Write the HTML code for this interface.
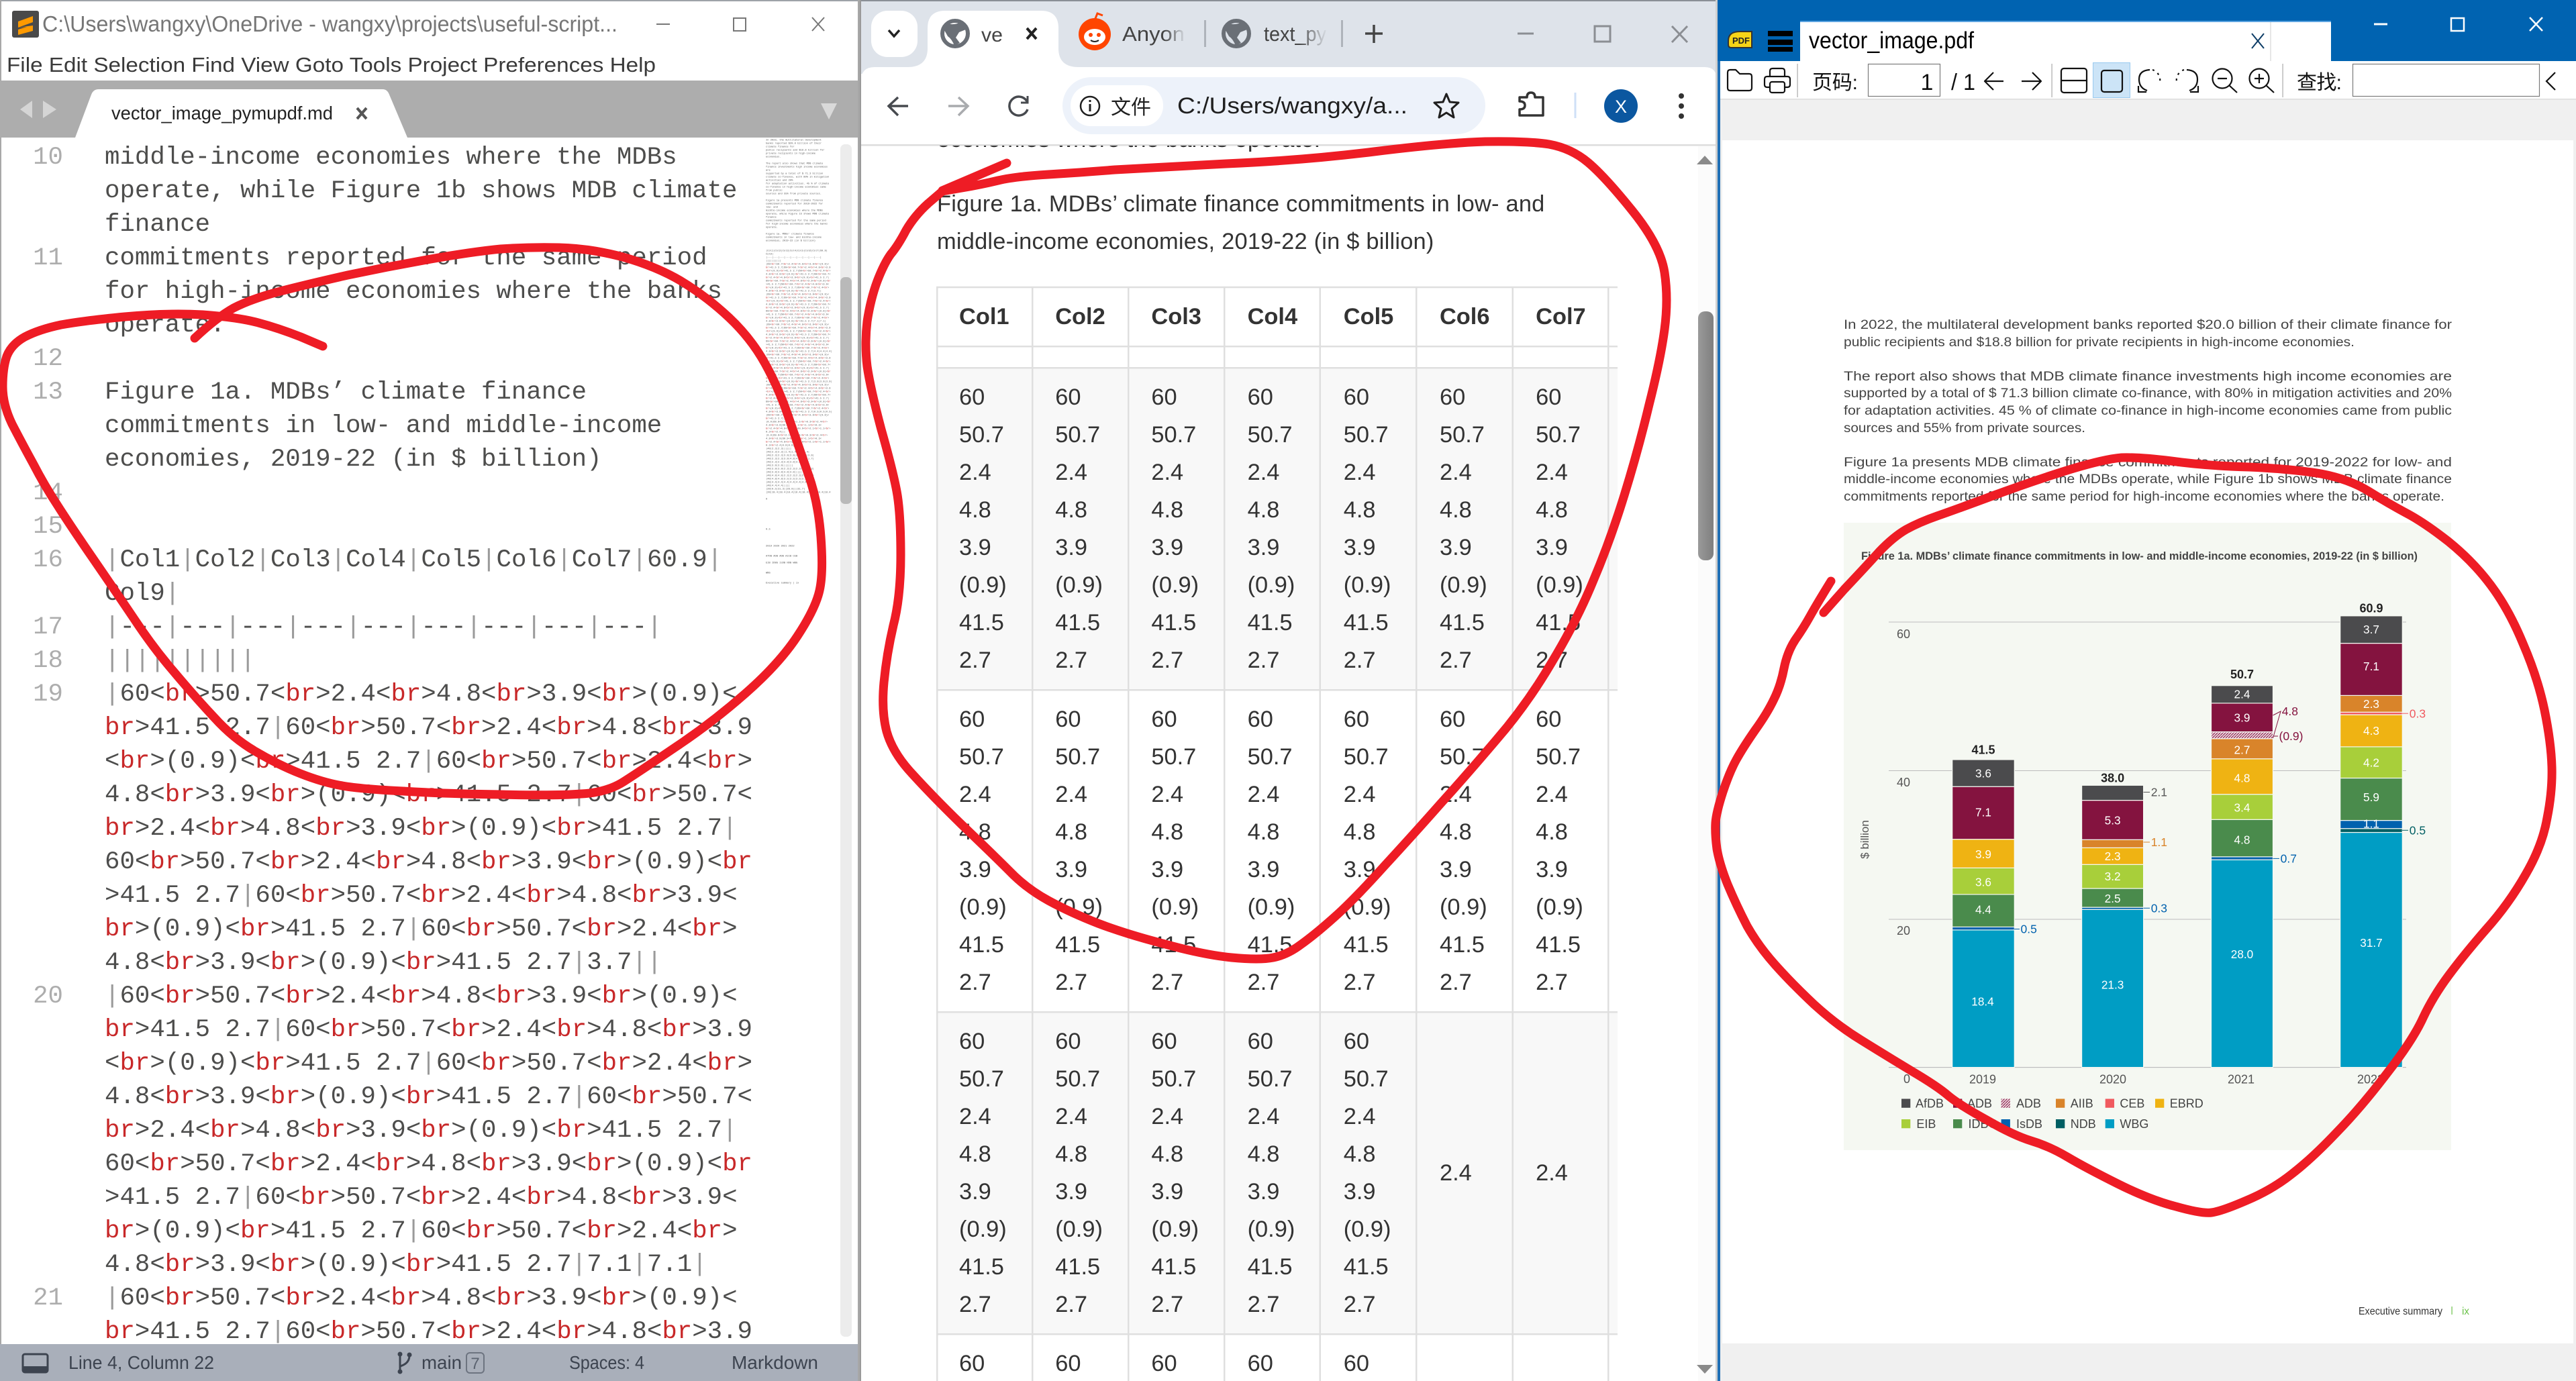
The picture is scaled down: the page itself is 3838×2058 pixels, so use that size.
<!DOCTYPE html>
<html lang="en"><head><meta charset="utf-8"><title>Screenshot</title>
<style>
html,body{margin:0;padding:0;background:#fff}
body{position:relative;width:3838px;height:2058px;overflow:hidden;font-family:"Liberation Sans","Noto Sans CJK SC",sans-serif}
svg{position:absolute;left:0;top:0}
svg text{font-family:"Liberation Sans","Noto Sans CJK SC",sans-serif}
.code,.nums,.mini{position:absolute;font-family:"Liberation Mono",monospace;white-space:pre;color:#4d4d4c}
.code{left:156px;top:210px;width:1000px;height:1793px;overflow:hidden;font-size:37.4px;line-height:50px}
.nums{left:48px;top:210px;width:46px;text-align:right;font-size:37.4px;line-height:50px;color:#adadad}
.mini{left:1141px;top:206px;font-size:37.4px;line-height:50px;transform:scale(.1);transform-origin:0 0;color:#5a5a5a}
.code i,.mini i{font-style:normal;color:#c82829}
.code u{text-decoration:none;color:#9a9a9a}
#cnt{position:absolute;left:0;top:217px;width:2410px;height:1841px;overflow:hidden;color:#333;font-size:34.4px;line-height:56px}
#cnt .t{position:absolute;left:1396px;white-space:nowrap;letter-spacing:.22px}
.r{position:absolute;left:1396px;display:grid;grid-template-columns:repeat(8,143.2px)}
.r div{padding-left:33px}
.h{font-weight:bold}
</style></head><body>
<svg width="3838" height="2058" viewBox="0 0 3838 2058">
<defs>
<linearGradient id="fd"><stop offset="0" stop-color="#dee3ea" stop-opacity="0"/><stop offset="1" stop-color="#dee3ea"/></linearGradient>
<linearGradient id="fw"><stop offset="0" stop-color="#fff" stop-opacity="0"/><stop offset="1" stop-color="#fff"/></linearGradient>
<linearGradient id="th" x1="0" x2="1"><stop offset="0" stop-color="#9a9a9a"/><stop offset="1" stop-color="#7f7f7f"/></linearGradient>
<pattern id="hat" width="4" height="4" patternUnits="userSpaceOnUse"><rect width="4" height="4" fill="#e9d3dc"/><path d="M0 4L4 0" stroke="#84133f" stroke-width="1"/></pattern>
</defs>

<!-- SUBLIME -->
<rect x="0" y="0" width="1281" height="2058" fill="#fff"/>
<rect x="0" y="0" width="1281" height="2" fill="#9ea3a8"/>
<rect x="0" y="0" width="2" height="2058" fill="#a8a8a8"/>
<rect x="18" y="16" width="40" height="40" rx="3" fill="#4a4a4a"/>
<path d="M27 32L49 24V33L27 41ZM27 41L49 38V46L27 52V44L40 40Z" fill="#ff9a00"/>
<text x="63" y="47" font-size="33" fill="#767676" textLength="857" lengthAdjust="spacingAndGlyphs">C:\Users\wangxy\OneDrive - wangxy\projects\useful-script...</text>
<path d="M978 36H998" stroke="#777" stroke-width="2"/>
<rect x="1093" y="27" width="18" height="19" fill="none" stroke="#777" stroke-width="2"/>
<path d="M1210 26L1228 46M1228 26L1210 46" stroke="#777" stroke-width="2"/>
<text x="10" y="107" font-size="31" fill="#3a3a3a" textLength="967" lengthAdjust="spacingAndGlyphs">File Edit Selection Find View Goto Tools Project Preferences Help</text>
<rect x="0" y="120" width="1280" height="85" fill="#adadad"/>
<path d="M112 205L136 141Q139 133 147 133H570Q577 133 580 141L607 205Z" fill="#fff"/>
<path d="M48 150V176L30 163ZM64 150V176L84 163Z" fill="#d5d5d5"/>
<path d="M1223 154H1247L1235 178Z" fill="#d9d9d9"/>
<text x="166" y="178" font-size="28" fill="#222" textLength="330" lengthAdjust="spacingAndGlyphs">vector_image_pymupdf.md</text>
<path d="M532 161L546 177M546 161L532 177" stroke="#555" stroke-width="4"/>
<rect x="1252" y="215" width="17" height="1777" rx="7" fill="#ececec"/>
<rect x="1252" y="413" width="17" height="338" rx="7" fill="#b9b9b9"/>
<rect x="0" y="2003" width="1281" height="55" fill="#a9afba"/>
<rect x="34" y="2018" width="37" height="27" rx="3" fill="none" stroke="#3d4450" stroke-width="3"/>
<rect x="34" y="2036" width="37" height="9" fill="#3d4450"/>
<text x="102" y="2040" font-size="28" fill="#3d4450" textLength="217" lengthAdjust="spacingAndGlyphs">Line 4, Column 22</text>
<path d="M596 2018V2044M596 2036Q610 2032 610 2020" fill="none" stroke="#3d4450" stroke-width="3"/>
<circle cx="596" cy="2018" r="3.5" fill="#3d4450"/><circle cx="596" cy="2044" r="3.5" fill="#3d4450"/><circle cx="610" cy="2019" r="3.5" fill="#3d4450"/>
<text x="628" y="2040" font-size="28" fill="#3d4450" textLength="60" lengthAdjust="spacingAndGlyphs">main</text>
<rect x="695" y="2016" width="26" height="30" rx="5" fill="none" stroke="#6d7480" stroke-width="2"/>
<text x="708" y="2040" font-size="24" fill="#5b6370" text-anchor="middle">7</text>
<text x="848" y="2040" font-size="28" fill="#3d4450" textLength="112" lengthAdjust="spacingAndGlyphs">Spaces: 4</text>
<text x="1090" y="2040" font-size="28" fill="#3d4450" textLength="129" lengthAdjust="spacingAndGlyphs">Markdown</text>
<rect x="1278" y="0" width="5" height="2058" fill="#a7a7a7"/>

<!-- CHROME -->
<rect x="1281" y="0" width="1280" height="2058" fill="#fff"/>
<rect x="1281" y="0" width="2" height="2058" fill="#9a9a9a"/>
<rect x="1283" y="0" width="1277" height="110" fill="#dee3ea"/>
<rect x="1283" y="0" width="1277" height="2" fill="#8a8f96"/>
<rect x="1298" y="16" width="69" height="69" rx="24" fill="#fff"/>
<path d="M1324 45L1332 54L1340 45" fill="none" stroke="#222" stroke-width="3.5"/>
<path d="M1352 100Q1382 100 1382 72V42Q1382 16 1408 16H1551Q1577 16 1577 42V72Q1577 100 1607 100Z" fill="#fff"/>
<circle cx="1423" cy="50" r="19" fill="#fff" stroke="#6a6f76" stroke-width="6"/>
<path d="M1411 35Q1422 38 1431 33L1439 44L1429 48L1424 56L1430 64L1422 68Q1418 58 1412 54L1407 45Z" fill="#6a6f76"/>
<text x="1462" y="62" font-size="30" fill="#444" textLength="32" lengthAdjust="spacingAndGlyphs">ve</text>
<path d="M1530 42L1544 58M1544 42L1530 58" stroke="#222" stroke-width="4"/>
<circle cx="1631" cy="51" r="24" fill="#ff4500"/><path d="M1631 30L1635 20L1643 23" fill="none" stroke="#ff4500" stroke-width="3"/>
<ellipse cx="1631" cy="55" rx="16" ry="12" fill="#fff"/><circle cx="1625" cy="52" r="3" fill="#ff4500"/><circle cx="1637" cy="52" r="3" fill="#ff4500"/>
<path d="M1625 60Q1631 64 1637 60" fill="none" stroke="#222" stroke-width="2"/>
<text x="1672" y="61" font-size="31" fill="#444" textLength="93" lengthAdjust="spacingAndGlyphs">Anyon</text>
<rect x="1735" y="25" width="32" height="50" fill="url(#fd)"/>
<rect x="1794" y="30" width="3" height="40" fill="#aeb3ba"/>
<circle cx="1842" cy="50" r="19" fill="#dee3ea" stroke="#6a6f76" stroke-width="6"/>
<path d="M1830 35Q1841 38 1850 33L1858 44L1848 48L1843 56L1849 64L1841 68Q1837 58 1831 54L1826 45Z" fill="#6a6f76"/>
<text x="1883" y="61" font-size="31" fill="#444" textLength="93" lengthAdjust="spacingAndGlyphs">text_py</text>
<rect x="1936" y="25" width="42" height="50" fill="url(#fd)"/>
<rect x="1998" y="30" width="3" height="40" fill="#aeb3ba"/>
<path d="M2047 37V64M2034 50H2060" stroke="#444" stroke-width="3.5"/>
<path d="M2261 50H2285" stroke="#8b8e93" stroke-width="3"/>
<rect x="2376" y="39" width="23" height="23" fill="none" stroke="#8b8e93" stroke-width="3"/>
<path d="M2491 39L2514 63M2514 39L2491 63" stroke="#8b8e93" stroke-width="3"/>
<path d="M1283 216V120Q1283 100 1303 100H2540Q2558 100 2558 120V216Z" fill="#fff"/>
<rect x="1283" y="215" width="1277" height="2.5" fill="#dcdcdc"/>
<path d="M1353 158H1325M1338 145L1324 158L1338 172" fill="none" stroke="#474a4f" stroke-width="3.5"/>
<path d="M1413 158H1441M1428 145L1442 158L1428 172" fill="none" stroke="#a9abae" stroke-width="3.5"/>
<path d="M1530 151A14 14 0 1 0 1531 163" fill="none" stroke="#474a4f" stroke-width="3.5"/><path d="M1531 143V153H1521" fill="none" stroke="#474a4f" stroke-width="3"/>
<rect x="1583" y="115" width="630" height="85" rx="42.5" fill="#edf2fa"/>
<rect x="1595" y="127" width="138" height="61" rx="30" fill="#fff"/>
<circle cx="1624" cy="158" r="14" fill="none" stroke="#1f1f1f" stroke-width="2.5"/><path d="M1624 155V166M1624 149V152" stroke="#1f1f1f" stroke-width="3"/>
<text x="1655" y="170" font-size="30" fill="#1f1f1f" textLength="60">文件</text>
<text x="1754" y="169" font-size="34" fill="#1f1f1f" textLength="343" lengthAdjust="spacingAndGlyphs">C:/Users/wangxy/a...</text>
<path d="M2155 140L2160 152L2173 153L2163 162L2166 175L2155 168L2144 175L2147 162L2137 153L2150 152Z" fill="none" stroke="#1f1f1f" stroke-width="3" stroke-linejoin="round"/>
<path d="M2264 145H2275Q2275 138 2281 138Q2287 138 2287 145H2299V172H2264V163Q2272 163 2272 157Q2272 151 2264 151Z" fill="none" stroke="#333" stroke-width="3.5" stroke-linejoin="round"/>
<rect x="2345.5" y="138" width="3" height="38" fill="#cfe0f7"/>
<circle cx="2415" cy="158" r="25" fill="#0b57a0"/>
<text x="2415" y="168" font-size="27" fill="#fff" text-anchor="middle">X</text>
<circle cx="2505" cy="143" r="4" fill="#333"/><circle cx="2505" cy="158" r="4" fill="#333"/><circle cx="2505" cy="173" r="4" fill="#333"/>
<rect x="1396" y="548" width="1014" height="480" fill="#f8f8f8"/>
<rect x="1396" y="1508" width="1014" height="480" fill="#f8f8f8"/>
<g fill="#dfdfdf">
<rect x="1395" y="428" width="2.5" height="1630"/><rect x="1537" y="428" width="2.5" height="1630"/><rect x="1680" y="428" width="2.5" height="1630"/><rect x="1823" y="428" width="2.5" height="1630"/><rect x="1965.5" y="428" width="2.5" height="1630"/><rect x="2109" y="428" width="2.5" height="1630"/><rect x="2252.5" y="428" width="2.5" height="1630"/><rect x="2395" y="428" width="2.5" height="1630"/>
<rect x="1395" y="426.8" width="1015" height="2.5"/><rect x="1395" y="515" width="1015" height="2.5"/><rect x="1395" y="547" width="1015" height="2.5"/><rect x="1395" y="1027" width="1015" height="2.5"/><rect x="1395" y="1507" width="1015" height="2.5"/><rect x="1395" y="1987" width="1015" height="2.5"/>
</g>
<rect x="2530" y="218" width="28" height="1840" fill="#fbfbfb"/>
<rect x="2530" y="464" width="23" height="371" rx="10" fill="url(#th)"/>
<path d="M2540 232L2552 245H2528Z" fill="#8a8a8a"/>
<path d="M2528 2034H2552L2540 2047Z" fill="#8a8a8a"/>
<rect x="2556" y="0" width="3" height="2058" fill="#cfcfcf"/>

<!-- PDF -->
<rect x="2559" y="0" width="1279" height="2058" fill="#f0f0f0"/>
<rect x="2559" y="0" width="4" height="2058" fill="#1f6fb5"/>
<rect x="2559" y="0" width="1279" height="91" fill="#0063b1"/>
<rect x="2563" y="91" width="1275" height="57" fill="#fff"/><rect x="2563" y="147" width="1275" height="1.5" fill="#dcdcdc"/>
<rect x="2566" y="209" width="1268" height="1793" fill="#fff"/>
<path d="M2575 61Q2575 47 2592 47H2610V71H2579Q2575 71 2575 66Z" fill="#f7d417" stroke="#333" stroke-width="2"/>
<text x="2594" y="65" font-size="13" font-weight="bold" fill="#222" text-anchor="middle">PDF</text>
<rect x="2634" y="46" width="37" height="8" fill="#000"/><rect x="2634" y="59" width="37" height="8" fill="#000"/><rect x="2634" y="70" width="37" height="7" fill="#000"/>
<rect x="2682" y="32" width="791" height="59" fill="#fff"/><rect x="2682" y="31" width="791" height="2" fill="#5aa3e0"/>
<rect x="3382.5" y="33" width="1" height="58" fill="#cfcfcf"/>
<text x="2695" y="72" font-size="35" fill="#000" textLength="246" lengthAdjust="spacingAndGlyphs">vector_image.pdf</text>
<path d="M3355 50L3373 72M3373 50L3355 72" stroke="#0c3c66" stroke-width="2"/>
<path d="M3537 36H3557" stroke="#fff" stroke-width="3"/>
<rect x="3652" y="27" width="19" height="19" fill="none" stroke="#fff" stroke-width="2.5"/>
<path d="M3769 26L3788 46M3788 26L3769 46" stroke="#fff" stroke-width="2.5"/>
<g fill="none" stroke="#111" stroke-width="2.2" stroke-linejoin="round">
<path d="M2574 108Q2574 104 2578 104H2586L2592 110H2606Q2610 110 2610 114V131Q2610 135 2606 135H2578Q2574 135 2574 131Z"/>
<path d="M2637 114V106Q2637 102 2641 102H2655Q2659 102 2659 106V114M2637 130H2633Q2629 130 2629 126V118Q2629 114 2633 114H2663Q2667 114 2667 118V126Q2667 130 2663 130H2659"/>
<rect x="2637" y="122" width="22" height="16" rx="3"/>
<path d="M2985 121H2958M2970 108L2957 121L2970 134M3012 121H3040M3028 108L3041 121L3028 134"/>
<rect x="3071" y="102" width="38" height="36" rx="4"/><path d="M3071 120H3109"/>
</g>
<rect x="3118.5" y="93.5" width="55" height="52" fill="#cce4f7" stroke="#99c9ef"/>
<rect x="3131" y="105" width="31" height="32" rx="4" fill="none" stroke="#111" stroke-width="2.2"/>
<g fill="none" stroke="#111" stroke-width="2.2">
<path d="M3199 135Q3187 131 3187 118Q3187 105 3203 104"/><path d="M3186 128V137H3198"/><path d="M3207 104A16 16 0 0 1 3218 122" stroke-dasharray="3 6"/>
<path d="M3262 135Q3274 131 3274 118Q3274 105 3258 104"/><path d="M3275 128V137H3263"/><path d="M3254 104A16 16 0 0 0 3243 122" stroke-dasharray="3 6"/>
<circle cx="3311" cy="117" r="14.5"/><path d="M3304 117H3318M3321 127L3333 138"/>
<circle cx="3366" cy="117" r="14.5"/><path d="M3359 117H3373M3366 110V124M3376 127L3388 138"/>
<path d="M3807 108L3794 121L3807 134"/>
</g>
<rect x="2677.5" y="95" width="1.2" height="50" fill="#aaa"/><rect x="3056.5" y="95" width="1.2" height="50" fill="#aaa"/><rect x="3400.5" y="95" width="1.2" height="50" fill="#aaa"/>
<text x="2700" y="133" font-size="30" fill="#111" textLength="68">页码:</text>
<rect x="2783.5" y="95.5" width="107" height="48" fill="#fff" stroke="#7a7a7a" stroke-width="1.2"/>
<text x="2871" y="134" font-size="34" fill="#111" text-anchor="middle">1</text>
<text x="2907" y="134" font-size="34" fill="#111" textLength="36" lengthAdjust="spacingAndGlyphs">/ 1</text>
<text x="3422" y="133" font-size="30" fill="#111" textLength="67">查找:</text>
<rect x="3505.5" y="95.5" width="278" height="48" fill="#fff" stroke="#7a7a7a" stroke-width="1.2"/>
<g font-size="19.5" fill="#444">
<text x="2747" y="490" textLength="906" lengthAdjust="spacingAndGlyphs">In 2022, the multilateral development banks reported $20.0 billion of their climate finance for</text>
<text x="2747" y="516" textLength="761" lengthAdjust="spacingAndGlyphs">public recipients and $18.8 billion for private recipients in high-income economies.</text>
<text x="2747" y="567" textLength="906" lengthAdjust="spacingAndGlyphs">The report also shows that MDB climate finance investments high income economies are</text>
<text x="2747" y="592" textLength="906" lengthAdjust="spacingAndGlyphs">supported by a total of $ 71.3 billion climate co-finance, with 80% in mitigation activities and 20%</text>
<text x="2747" y="618" textLength="906" lengthAdjust="spacingAndGlyphs">for adaptation activities. 45 % of climate co-finance in high-income economies came from public</text>
<text x="2747" y="644" textLength="360" lengthAdjust="spacingAndGlyphs">sources and 55% from private sources.</text>
<text x="2747" y="695" textLength="906" lengthAdjust="spacingAndGlyphs">Figure 1a presents MDB climate finance commitments reported for 2019-2022 for low- and</text>
<text x="2747" y="720" textLength="906" lengthAdjust="spacingAndGlyphs">middle-income economies where the MDBs operate, while Figure 1b shows MDB climate finance</text>
<text x="2747" y="746" textLength="895" lengthAdjust="spacingAndGlyphs">commitments reported for the same period for high-income economies where the banks operate.</text>
</g>
<rect x="2747" y="779" width="905" height="935" fill="#f5f8f2"/>
<text x="2773" y="834" font-size="16.5" font-weight="bold" fill="#444" textLength="829" lengthAdjust="spacingAndGlyphs">Figure 1a. MDBs’ climate finance commitments in low- and middle-income economies, 2019-22 (in $ billion)</text>
<g fill="#bdbdbd"><rect x="2814" y="926.5" width="771" height="1"/><rect x="2814" y="1148" width="771" height="1"/><rect x="2814" y="1369.5" width="771" height="1"/><rect x="2814" y="1590" width="771" height="1.2"/></g>
<g font-size="18" fill="#555" text-anchor="middle">
<text x="2836" y="951">60</text><text x="2836" y="1172">40</text><text x="2836" y="1393">20</text><text x="2841" y="1614">0</text>
<text x="2954" y="1614.5">2019</text><text x="3148" y="1614.5">2020</text><text x="3339" y="1614.5">2021</text><text x="3532" y="1614.5">2022</text>
<text transform="translate(2784 1251) rotate(-90)" font-size="17">$ billion</text>
</g>
<g stroke="#f5f8f2" stroke-width="1.2">
<rect x="2908.7" y="1385.9" width="92.6" height="204.7" fill="#009dc4"/><rect x="2908.7" y="1381.4" width="92.6" height="4.5" fill="#0061ae"/><rect x="2908.7" y="1332.9" width="92.6" height="48.5" fill="#4a8b4c"/><rect x="2908.7" y="1293.4" width="92.6" height="39.5" fill="#a8cf3a"/><rect x="2908.7" y="1250.7" width="92.6" height="42.7" fill="#efb313"/><rect x="2908.7" y="1172.2" width="92.6" height="78.5" fill="#84133f"/><rect x="2908.7" y="1132" width="92.6" height="40.2" fill="#4b4b4d"/>
<rect x="3101.6" y="1355.3" width="92" height="235.3" fill="#009dc4"/><rect x="3101.6" y="1352.1" width="92" height="3.2" fill="#0061ae"/><rect x="3101.6" y="1324" width="92" height="28.1" fill="#4a8b4c"/><rect x="3101.6" y="1288.3" width="92" height="35.7" fill="#a8cf3a"/><rect x="3101.6" y="1263.4" width="92" height="24.9" fill="#efb313"/><rect x="3101.6" y="1251.3" width="92" height="12.1" fill="#d9842a"/><rect x="3101.6" y="1192.6" width="92" height="58.7" fill="#84133f"/><rect x="3101.6" y="1170.3" width="92" height="22.3" fill="#4b4b4d"/>
<rect x="3294.5" y="1281.3" width="92" height="309.3" fill="#009dc4"/><rect x="3294.5" y="1276.8" width="92" height="4.5" fill="#0061ae"/><rect x="3294.5" y="1221.3" width="92" height="55.5" fill="#4a8b4c"/><rect x="3294.5" y="1183.7" width="92" height="37.6" fill="#a8cf3a"/><rect x="3294.5" y="1130.8" width="92" height="52.9" fill="#efb313"/><rect x="3294.5" y="1100.8" width="92" height="30" fill="#d9842a"/><rect x="3294.5" y="1090.6" width="92" height="10.2" fill="url(#hat)"/><rect x="3294.5" y="1047.9" width="92" height="42.7" fill="#84133f"/><rect x="3294.5" y="1021.7" width="92" height="26.2" fill="#4b4b4d"/>
<rect x="3486.7" y="1240.5" width="92.6" height="350.1" fill="#009dc4"/><rect x="3486.7" y="1234.7" width="92.6" height="5.8" fill="#005f63"/><rect x="3486.7" y="1222.6" width="92.6" height="12.1" fill="#0061ae"/><rect x="3486.7" y="1159.5" width="92.6" height="63.1" fill="#4a8b4c"/><rect x="3486.7" y="1112.9" width="92.6" height="46.6" fill="#a8cf3a"/><rect x="3486.7" y="1065.1" width="92.6" height="47.8" fill="#efb313"/><rect x="3486.7" y="1061.3" width="92.6" height="3.8" fill="#f05a5f"/><rect x="3486.7" y="1036.4" width="92.6" height="24.9" fill="#d9842a"/><rect x="3486.7" y="958.6" width="92.6" height="77.8" fill="#84133f"/><rect x="3486.7" y="917.8" width="92.6" height="40.8" fill="#4b4b4d"/>
</g>
<g font-size="17.2" fill="#fff" text-anchor="middle">
<text x="2955" y="1158.5">3.6</text><text x="2955" y="1216.5">7.1</text><text x="2955" y="1279">3.9</text><text x="2955" y="1320.5">3.6</text><text x="2955" y="1361.5">4.4</text><text x="2954" y="1498.5">18.4</text>
<text x="3147.6" y="1228.5">5.3</text><text x="3147.6" y="1282">2.3</text><text x="3147.6" y="1312">3.2</text><text x="3147.6" y="1345">2.5</text><text x="3147.6" y="1473.5">21.3</text>
<text x="3340.5" y="1040.5">2.4</text><text x="3340.5" y="1075.5">3.9</text><text x="3340.5" y="1123.5">2.7</text><text x="3340.5" y="1165.5">4.8</text><text x="3340.5" y="1209.5">3.4</text><text x="3340.5" y="1257.5">4.8</text><text x="3340.5" y="1428">28.0</text>
<text x="3533" y="944">3.7</text><text x="3533" y="999">7.1</text><text x="3533" y="1055">2.3</text><text x="3533" y="1095">4.3</text><text x="3533" y="1142.5">4.2</text><text x="3533" y="1194">5.9</text><text x="3533" y="1233.5">1.1</text><text x="3533" y="1411">31.7</text>
</g>
<g font-size="18" font-weight="bold" fill="#222" text-anchor="middle">
<text x="2955" y="1123.5">41.5</text><text x="3147.6" y="1165.5">38.0</text><text x="3340.5" y="1011">50.7</text><text x="3533" y="912.5">60.9</text>
</g>
<g font-size="17.5">
<text x="3010.5" y="1390.5" fill="#0061ae">0.5</text><text x="3204.7" y="1186.5" fill="#555">2.1</text><text x="3204.7" y="1261" fill="#d9842a">1.1</text><text x="3204.7" y="1359.5" fill="#0061ae">0.3</text>
<text x="3399.7" y="1066" fill="#84133f">4.8</text><text x="3395.5" y="1103" fill="#84133f">(0.9)</text><text x="3397.6" y="1285.5" fill="#0061ae">0.7</text>
<text x="3589.8" y="1069.5" fill="#f05a5f">0.3</text><text x="3589.8" y="1243.5" fill="#005f63">0.5</text>
</g>
<g fill="none" stroke-width="1">
<path d="M3001 1384.5H3009" stroke="#0061ae"/><path d="M3193.5 1180.5H3203" stroke="#555"/><path d="M3193.5 1255H3203" stroke="#d9842a"/><path d="M3193.5 1353.3H3203" stroke="#0061ae"/>
<path d="M3386.5 1066L3398 1060L3386.5 1100M3386.5 1097H3394" stroke="#84133f"/><path d="M3386.5 1279.4H3396" stroke="#0061ae"/>
<path d="M3579 1063.2H3588" stroke="#f05a5f"/><path d="M3579 1237.3H3588" stroke="#005f63"/>
</g>
<g>
<rect x="2833" y="1637.5" width="13.3" height="13.3" fill="#4b4b4d"/><rect x="2910" y="1637.5" width="13.3" height="13.3" fill="#84133f"/><rect x="2981.6" y="1637.5" width="13.3" height="13.3" fill="url(#hat)"/><rect x="3063" y="1637.5" width="13.3" height="13.3" fill="#d9842a"/><rect x="3136.7" y="1637.5" width="13.3" height="13.3" fill="#f05a5f"/><rect x="3211" y="1637.5" width="13.3" height="13.3" fill="#efb313"/>
<rect x="2833" y="1668" width="13.3" height="13.3" fill="#a8cf3a"/><rect x="2910" y="1668" width="13.3" height="13.3" fill="#4a8b4c"/><rect x="2981.6" y="1668" width="13.3" height="13.3" fill="#0061ae"/><rect x="3063" y="1668" width="13.3" height="13.3" fill="#005f63"/><rect x="3136.7" y="1668" width="13.3" height="13.3" fill="#009dc4"/>
</g>
<g font-size="18" fill="#444">
<text x="2854" y="1650.5">AfDB</text><text x="2931" y="1650.5">ADB</text><text x="3004" y="1650.5">ADB</text><text x="3084.8" y="1650.5">AIIB</text><text x="3158.4" y="1650.5">CEB</text><text x="3232.8" y="1650.5">EBRD</text>
<text x="2855.4" y="1681">EIB</text><text x="2932.5" y="1681">IDBG</text><text x="3004" y="1681">IsDB</text><text x="3084.8" y="1681">NDB</text><text x="3158.4" y="1681">WBG</text>
</g>
<text x="3514" y="1959" font-size="16" fill="#333" textLength="125" lengthAdjust="spacingAndGlyphs">Executive summary</text>
<rect x="3652.5" y="1947" width="1.2" height="12" fill="#6cc24a"/>
<text x="3668" y="1959" font-size="16" fill="#6cc24a" textLength="11" lengthAdjust="spacingAndGlyphs">ix</text>
</svg>

<div class="nums">10


11


12
13


14
15
16

17
18
19








20








21</div>

<div class="code">middle-income economies where the MDBs
operate, while Figure 1b shows MDB climate
finance
commitments reported for the same period
for high-income economies where the banks
operate.

Figure 1a. MDBs’ climate finance
commitments in low- and middle-income
economies, 2019-22 (in $ billion)


<u>|</u>Col1<u>|</u>Col2<u>|</u>Col3<u>|</u>Col4<u>|</u>Col5<u>|</u>Col6<u>|</u>Col7<u>|</u>60.9<u>|</u>
Col9<u>|</u>
<u>|</u>---<u>|</u>---<u>|</u>---<u>|</u>---<u>|</u>---<u>|</u>---<u>|</u>---<u>|</u>---<u>|</u>---<u>|</u>
<u>||||||||||</u>
<u>|</u>60&lt;<i>br</i>&gt;50.7&lt;<i>br</i>&gt;2.4&lt;<i>br</i>&gt;4.8&lt;<i>br</i>&gt;3.9&lt;<i>br</i>&gt;(0.9)&lt;
<i>br</i>&gt;41.5 2.7<u>|</u>60&lt;<i>br</i>&gt;50.7&lt;<i>br</i>&gt;2.4&lt;<i>br</i>&gt;4.8&lt;<i>br</i>&gt;3.9
&lt;<i>br</i>&gt;(0.9)&lt;<i>br</i>&gt;41.5 2.7<u>|</u>60&lt;<i>br</i>&gt;50.7&lt;<i>br</i>&gt;2.4&lt;<i>br</i>&gt;
4.8&lt;<i>br</i>&gt;3.9&lt;<i>br</i>&gt;(0.9)&lt;<i>br</i>&gt;41.5 2.7<u>|</u>60&lt;<i>br</i>&gt;50.7&lt;
<i>br</i>&gt;2.4&lt;<i>br</i>&gt;4.8&lt;<i>br</i>&gt;3.9&lt;<i>br</i>&gt;(0.9)&lt;<i>br</i>&gt;41.5 2.7<u>|</u>
60&lt;<i>br</i>&gt;50.7&lt;<i>br</i>&gt;2.4&lt;<i>br</i>&gt;4.8&lt;<i>br</i>&gt;3.9&lt;<i>br</i>&gt;(0.9)&lt;<i>br</i>
&gt;41.5 2.7<u>|</u>60&lt;<i>br</i>&gt;50.7&lt;<i>br</i>&gt;2.4&lt;<i>br</i>&gt;4.8&lt;<i>br</i>&gt;3.9&lt;
<i>br</i>&gt;(0.9)&lt;<i>br</i>&gt;41.5 2.7<u>|</u>60&lt;<i>br</i>&gt;50.7&lt;<i>br</i>&gt;2.4&lt;<i>br</i>&gt;
4.8&lt;<i>br</i>&gt;3.9&lt;<i>br</i>&gt;(0.9)&lt;<i>br</i>&gt;41.5 2.7<u>|</u>3.7<u>||</u>
<u>|</u>60&lt;<i>br</i>&gt;50.7&lt;<i>br</i>&gt;2.4&lt;<i>br</i>&gt;4.8&lt;<i>br</i>&gt;3.9&lt;<i>br</i>&gt;(0.9)&lt;
<i>br</i>&gt;41.5 2.7<u>|</u>60&lt;<i>br</i>&gt;50.7&lt;<i>br</i>&gt;2.4&lt;<i>br</i>&gt;4.8&lt;<i>br</i>&gt;3.9
&lt;<i>br</i>&gt;(0.9)&lt;<i>br</i>&gt;41.5 2.7<u>|</u>60&lt;<i>br</i>&gt;50.7&lt;<i>br</i>&gt;2.4&lt;<i>br</i>&gt;
4.8&lt;<i>br</i>&gt;3.9&lt;<i>br</i>&gt;(0.9)&lt;<i>br</i>&gt;41.5 2.7<u>|</u>60&lt;<i>br</i>&gt;50.7&lt;
<i>br</i>&gt;2.4&lt;<i>br</i>&gt;4.8&lt;<i>br</i>&gt;3.9&lt;<i>br</i>&gt;(0.9)&lt;<i>br</i>&gt;41.5 2.7<u>|</u>
60&lt;<i>br</i>&gt;50.7&lt;<i>br</i>&gt;2.4&lt;<i>br</i>&gt;4.8&lt;<i>br</i>&gt;3.9&lt;<i>br</i>&gt;(0.9)&lt;<i>br</i>
&gt;41.5 2.7<u>|</u>60&lt;<i>br</i>&gt;50.7&lt;<i>br</i>&gt;2.4&lt;<i>br</i>&gt;4.8&lt;<i>br</i>&gt;3.9&lt;
<i>br</i>&gt;(0.9)&lt;<i>br</i>&gt;41.5 2.7<u>|</u>60&lt;<i>br</i>&gt;50.7&lt;<i>br</i>&gt;2.4&lt;<i>br</i>&gt;
4.8&lt;<i>br</i>&gt;3.9&lt;<i>br</i>&gt;(0.9)&lt;<i>br</i>&gt;41.5 2.7<u>|</u>7.1<u>|</u>7.1<u>|</u>
<u>|</u>60&lt;<i>br</i>&gt;50.7&lt;<i>br</i>&gt;2.4&lt;<i>br</i>&gt;4.8&lt;<i>br</i>&gt;3.9&lt;<i>br</i>&gt;(0.9)&lt;
<i>br</i>&gt;41.5 2.7<u>|</u>60&lt;<i>br</i>&gt;50.7&lt;<i>br</i>&gt;2.4&lt;<i>br</i>&gt;4.8&lt;<i>br</i>&gt;3.9</div>

<div class="mini">In 2022, the multilateral development
banks reported $20.0 billion of their
climate finance for
public recipients and $18.8 billion for
private recipients in high-income
economies.

The report also shows that MDB climate
finance investments high income economies
are
supported by a total of $ 71.3 billion
climate co-finance, with 80% in mitigation
activities and 20%
for adaptation activities. 45 % of climate
co-finance in high-income economies came
from public
sources and 55% from private sources.

Figure 1a presents MDB climate finance
commitments reported for 2019-2022 for
low- and
middle-income economies where the MDBs
operate, while Figure 1b shows MDB climate
finance
commitments reported for the same period
for high-income economies where the banks
operate.

Figure 1a. MDBs’ climate finance
commitments in low- and middle-income
economies, 2019-22 (in $ billion)


|Col1|Col2|Col3|Col4|Col5|Col6|Col7|60.9|
Col9|
|---|---|---|---|---|---|---|---|---|
||||||||||
|60&lt;<i>br</i>&gt;50.7&lt;<i>br</i>&gt;2.4&lt;<i>br</i>&gt;4.8&lt;<i>br</i>&gt;3.9&lt;<i>br</i>&gt;(0.9)&lt;
<i>br</i>&gt;41.5 2.7|60&lt;<i>br</i>&gt;50.7&lt;<i>br</i>&gt;2.4&lt;<i>br</i>&gt;4.8&lt;<i>br</i>&gt;3.9
&lt;<i>br</i>&gt;(0.9)&lt;<i>br</i>&gt;41.5 2.7|60&lt;<i>br</i>&gt;50.7&lt;<i>br</i>&gt;2.4&lt;<i>br</i>&gt;
4.8&lt;<i>br</i>&gt;3.9&lt;<i>br</i>&gt;(0.9)&lt;<i>br</i>&gt;41.5 2.7|60&lt;<i>br</i>&gt;50.7&lt;
<i>br</i>&gt;2.4&lt;<i>br</i>&gt;4.8&lt;<i>br</i>&gt;3.9&lt;<i>br</i>&gt;(0.9)&lt;<i>br</i>&gt;41.5 2.7|
60&lt;<i>br</i>&gt;50.7&lt;<i>br</i>&gt;2.4&lt;<i>br</i>&gt;4.8&lt;<i>br</i>&gt;3.9&lt;<i>br</i>&gt;(0.9)&lt;<i>br</i>
&gt;41.5 2.7|60&lt;<i>br</i>&gt;50.7&lt;<i>br</i>&gt;2.4&lt;<i>br</i>&gt;4.8&lt;<i>br</i>&gt;3.9&lt;
<i>br</i>&gt;(0.9)&lt;<i>br</i>&gt;41.5 2.7|60&lt;<i>br</i>&gt;50.7&lt;<i>br</i>&gt;2.4&lt;<i>br</i>&gt;
4.8&lt;<i>br</i>&gt;3.9&lt;<i>br</i>&gt;(0.9)&lt;<i>br</i>&gt;41.5 2.7|3.7||
|60&lt;<i>br</i>&gt;50.7&lt;<i>br</i>&gt;2.4&lt;<i>br</i>&gt;4.8&lt;<i>br</i>&gt;3.9&lt;<i>br</i>&gt;(0.9)&lt;
<i>br</i>&gt;41.5 2.7|60&lt;<i>br</i>&gt;50.7&lt;<i>br</i>&gt;2.4&lt;<i>br</i>&gt;4.8&lt;<i>br</i>&gt;3.9
&lt;<i>br</i>&gt;(0.9)&lt;<i>br</i>&gt;41.5 2.7|60&lt;<i>br</i>&gt;50.7&lt;<i>br</i>&gt;2.4&lt;<i>br</i>&gt;
4.8&lt;<i>br</i>&gt;3.9&lt;<i>br</i>&gt;(0.9)&lt;<i>br</i>&gt;41.5 2.7|60&lt;<i>br</i>&gt;50.7&lt;
<i>br</i>&gt;2.4&lt;<i>br</i>&gt;4.8&lt;<i>br</i>&gt;3.9&lt;<i>br</i>&gt;(0.9)&lt;<i>br</i>&gt;41.5 2.7|
60&lt;<i>br</i>&gt;50.7&lt;<i>br</i>&gt;2.4&lt;<i>br</i>&gt;4.8&lt;<i>br</i>&gt;3.9&lt;<i>br</i>&gt;(0.9)&lt;<i>br</i>
&gt;41.5 2.7|60&lt;<i>br</i>&gt;50.7&lt;<i>br</i>&gt;2.4&lt;<i>br</i>&gt;4.8&lt;<i>br</i>&gt;3.9&lt;
<i>br</i>&gt;(0.9)&lt;<i>br</i>&gt;41.5 2.7|60&lt;<i>br</i>&gt;50.7&lt;<i>br</i>&gt;2.4&lt;<i>br</i>&gt;
4.8&lt;<i>br</i>&gt;3.9&lt;<i>br</i>&gt;(0.9)&lt;<i>br</i>&gt;41.5 2.7|7.1|7.1|
|60&lt;<i>br</i>&gt;50.7&lt;<i>br</i>&gt;2.4&lt;<i>br</i>&gt;4.8&lt;<i>br</i>&gt;3.9&lt;<i>br</i>&gt;(0.9)&lt;
<i>br</i>&gt;41.5 2.7|60&lt;<i>br</i>&gt;50.7&lt;<i>br</i>&gt;2.4&lt;<i>br</i>&gt;4.8&lt;<i>br</i>&gt;3.9
&lt;<i>br</i>&gt;(0.9)&lt;<i>br</i>&gt;41.5 2.7|60&lt;<i>br</i>&gt;50.7&lt;<i>br</i>&gt;2.4&lt;<i>br</i>&gt;
4.8&lt;<i>br</i>&gt;3.9&lt;<i>br</i>&gt;(0.9)&lt;<i>br</i>&gt;41.5 2.7|60&lt;<i>br</i>&gt;50.7&lt;
<i>br</i>&gt;2.4&lt;<i>br</i>&gt;4.8&lt;<i>br</i>&gt;3.9&lt;<i>br</i>&gt;(0.9)&lt;<i>br</i>&gt;41.5 2.7|
60&lt;<i>br</i>&gt;50.7&lt;<i>br</i>&gt;2.4&lt;<i>br</i>&gt;4.8&lt;<i>br</i>&gt;3.9&lt;<i>br</i>&gt;(0.9)&lt;<i>br</i>
&gt;41.5 2.7|60&lt;<i>br</i>&gt;50.7&lt;<i>br</i>&gt;2.4&lt;<i>br</i>&gt;4.8&lt;<i>br</i>&gt;3.9&lt;
<i>br</i>&gt;(0.9)&lt;<i>br</i>&gt;41.5 2.7|60&lt;<i>br</i>&gt;50.7&lt;<i>br</i>&gt;2.4&lt;<i>br</i>&gt;
4.8&lt;<i>br</i>&gt;3.9&lt;<i>br</i>&gt;(0.9)&lt;<i>br</i>&gt;41.5 2.7|4.4|4.4|4.4|
|60&lt;<i>br</i>&gt;50.7&lt;<i>br</i>&gt;2.4&lt;<i>br</i>&gt;4.8&lt;<i>br</i>&gt;3.9&lt;<i>br</i>&gt;(0.9)&lt;
<i>br</i>&gt;41.5 2.7|60&lt;<i>br</i>&gt;50.7&lt;<i>br</i>&gt;2.4&lt;<i>br</i>&gt;4.8&lt;<i>br</i>&gt;3.9
&lt;<i>br</i>&gt;(0.9)&lt;<i>br</i>&gt;41.5 2.7|60&lt;<i>br</i>&gt;50.7&lt;<i>br</i>&gt;2.4&lt;<i>br</i>&gt;
4.8&lt;<i>br</i>&gt;3.9&lt;<i>br</i>&gt;(0.9)&lt;<i>br</i>&gt;41.5 2.7|60&lt;<i>br</i>&gt;50.7&lt;
<i>br</i>&gt;2.4&lt;<i>br</i>&gt;4.8&lt;<i>br</i>&gt;3.9&lt;<i>br</i>&gt;(0.9)&lt;<i>br</i>&gt;41.5 2.7|
60&lt;<i>br</i>&gt;50.7&lt;<i>br</i>&gt;2.4&lt;<i>br</i>&gt;4.8&lt;<i>br</i>&gt;3.9&lt;<i>br</i>&gt;(0.9)&lt;<i>br</i>
&gt;41.5 2.7|60&lt;<i>br</i>&gt;50.7&lt;<i>br</i>&gt;2.4&lt;<i>br</i>&gt;4.8&lt;<i>br</i>&gt;3.9&lt;
<i>br</i>&gt;(0.9)&lt;<i>br</i>&gt;41.5 2.7|60&lt;<i>br</i>&gt;50.7&lt;<i>br</i>&gt;2.4&lt;<i>br</i>&gt;
4.8&lt;<i>br</i>&gt;3.9&lt;<i>br</i>&gt;(0.9)&lt;<i>br</i>&gt;41.5 2.7|3.9|3.9|3.9|
|60&lt;<i>br</i>&gt;50.7&lt;<i>br</i>&gt;2.4&lt;<i>br</i>&gt;4.8&lt;<i>br</i>&gt;3.9&lt;<i>br</i>&gt;(0.9)&lt;
<i>br</i>&gt;41.5 2.7|60&lt;<i>br</i>&gt;50.7&lt;<i>br</i>&gt;2.4&lt;<i>br</i>&gt;4.8&lt;<i>br</i>&gt;3.9
&lt;<i>br</i>&gt;(0.9)&lt;<i>br</i>&gt;41.5 2.7|60&lt;<i>br</i>&gt;50.7&lt;<i>br</i>&gt;2.4&lt;<i>br</i>&gt;
4.8&lt;<i>br</i>&gt;3.9&lt;<i>br</i>&gt;(0.9)&lt;<i>br</i>&gt;41.5 2.7|60&lt;<i>br</i>&gt;50.7&lt;
<i>br</i>&gt;2.4&lt;<i>br</i>&gt;4.8&lt;<i>br</i>&gt;3.9&lt;<i>br</i>&gt;(0.9)&lt;<i>br</i>&gt;41.5 2.7|
60&lt;<i>br</i>&gt;50.7&lt;<i>br</i>&gt;2.4&lt;<i>br</i>&gt;4.8&lt;<i>br</i>&gt;3.9&lt;<i>br</i>&gt;(0.9)&lt;<i>br</i>
&gt;41.5 2.7|60&lt;<i>br</i>&gt;50.7&lt;<i>br</i>&gt;2.4&lt;<i>br</i>&gt;4.8&lt;<i>br</i>&gt;3.9&lt;
<i>br</i>&gt;(0.9)&lt;<i>br</i>&gt;41.5 2.7|60&lt;<i>br</i>&gt;50.7&lt;<i>br</i>&gt;2.4&lt;<i>br</i>&gt;
4.8&lt;<i>br</i>&gt;3.9&lt;<i>br</i>&gt;(0.9)&lt;<i>br</i>&gt;41.5 2.7|0.5|0.5|0.5|
|60&lt;<i>br</i>&gt;50.7&lt;<i>br</i>&gt;2.4&lt;<i>br</i>&gt;4.8&lt;<i>br</i>&gt;3.9&lt;<i>br</i>&gt;(0.9)&lt;
<i>br</i>&gt;41.5 2.7|||||||
|0.0|60.9&lt;<i>br</i>&gt;2.1&lt;<i>br</i>&gt;1.1&lt;<i>br</i>&gt;0.3&lt;<i>br</i>&gt;2.4&lt;<i>br</i>&gt;
4.8&lt;<i>br</i>&gt;3.9|60.9&lt;<i>br</i>&gt;2.1&lt;<i>br</i>&gt;1.1&lt;<i>br</i>&gt;0.3&lt;
<i>br</i>&gt;2.4&lt;<i>br</i>&gt;4.8&lt;<i>br</i>&gt;3.9|60.9&lt;<i>br</i>&gt;2.1&lt;<i>br</i>&gt;1.1&lt;<i>br</i>&gt;
0.3&lt;<i>br</i>&gt;2.4|||
|0.0|60.9&lt;<i>br</i>&gt;2.1&lt;<i>br</i>&gt;1.1&lt;<i>br</i>&gt;0.3&lt;<i>br</i>&gt;2.4&lt;<i>br</i>&gt;
4.8&lt;<i>br</i>&gt;3.9|60.9&lt;<i>br</i>&gt;2.1&lt;<i>br</i>&gt;1.1&lt;<i>br</i>&gt;0.3&lt;
<i>br</i>&gt;2.4&lt;<i>br</i>&gt;4.8&lt;<i>br</i>&gt;3.9|60.9&lt;<i>br</i>&gt;2.1&lt;<i>br</i>&gt;1.1&lt;<i>br</i>&gt;
0.3&lt;<i>br</i>&gt;2.4|0.9|0.9|
|40|2.3|2.3||||||
|40|2.3|2.3||1.4|1.4|1.4|1.4|
|40|2.3|2.3|3.9|3.9|3.9|3.9|3.9|
|40|2.3|2.3|3.9|4.8|4.8|4.8|1.7|
|40|2.3|2.3|3.9|3.9|3.9|3.9|
|40|3.9|3.9|||||||
|40|3.9|3.9|2.3|2.3|2.3|2.3|2.3|
|40|3.9|3.9|3.9|3.9|||||
|40|4.8|4.8|2.3|2.3|2.3|2.3|2.3|
|40|4.8|4.8|3.5|3.5|3.5|3.5|3.5|
|40|4.4|4.4|4.4|4.4|4.4|4.4|4.4|
|40|4.4|4.4|||||
|20|0.5|21.3||28.0|||31.7|
|20|18.4|18.4|18.4|18.4|18.4|18.4|18.4|18.4

0








0.5




2019 2020 2021 2022


AfDB ADB ADB AIIB CEB

EIB IDBG IsDB NDB WBG


WBG


Executive summary | ix</div>

<div id="cnt">
<div class="t" style="top:-37px">economies where the banks operate.</div>
<div class="t" style="top:59px">Figure 1a. MDBs’ climate finance commitments in low- and<br>middle-income economies, 2019-22 (in $ billion)</div>
<div class="r h" style="top:227px"><div>Col1</div><div>Col2</div><div>Col3</div><div>Col4</div><div>Col5</div><div>Col6</div><div>Col7</div></div>
<div class="r" style="top:346.5px">
<div>60<br>50.7<br>2.4<br>4.8<br>3.9<br>(0.9)<br>41.5<br>2.7</div><div>60<br>50.7<br>2.4<br>4.8<br>3.9<br>(0.9)<br>41.5<br>2.7</div><div>60<br>50.7<br>2.4<br>4.8<br>3.9<br>(0.9)<br>41.5<br>2.7</div><div>60<br>50.7<br>2.4<br>4.8<br>3.9<br>(0.9)<br>41.5<br>2.7</div><div>60<br>50.7<br>2.4<br>4.8<br>3.9<br>(0.9)<br>41.5<br>2.7</div><div>60<br>50.7<br>2.4<br>4.8<br>3.9<br>(0.9)<br>41.5<br>2.7</div><div>60<br>50.7<br>2.4<br>4.8<br>3.9<br>(0.9)<br>41.5<br>2.7</div></div>
<div class="r" style="top:826.5px">
<div>60<br>50.7<br>2.4<br>4.8<br>3.9<br>(0.9)<br>41.5<br>2.7</div><div>60<br>50.7<br>2.4<br>4.8<br>3.9<br>(0.9)<br>41.5<br>2.7</div><div>60<br>50.7<br>2.4<br>4.8<br>3.9<br>(0.9)<br>41.5<br>2.7</div><div>60<br>50.7<br>2.4<br>4.8<br>3.9<br>(0.9)<br>41.5<br>2.7</div><div>60<br>50.7<br>2.4<br>4.8<br>3.9<br>(0.9)<br>41.5<br>2.7</div><div>60<br>50.7<br>2.4<br>4.8<br>3.9<br>(0.9)<br>41.5<br>2.7</div><div>60<br>50.7<br>2.4<br>4.8<br>3.9<br>(0.9)<br>41.5<br>2.7</div></div>
<div class="r" style="top:1306.5px">
<div>60<br>50.7<br>2.4<br>4.8<br>3.9<br>(0.9)<br>41.5<br>2.7</div><div>60<br>50.7<br>2.4<br>4.8<br>3.9<br>(0.9)<br>41.5<br>2.7</div><div>60<br>50.7<br>2.4<br>4.8<br>3.9<br>(0.9)<br>41.5<br>2.7</div><div>60<br>50.7<br>2.4<br>4.8<br>3.9<br>(0.9)<br>41.5<br>2.7</div><div>60<br>50.7<br>2.4<br>4.8<br>3.9<br>(0.9)<br>41.5<br>2.7</div><div style="padding-top:196px">2.4</div><div style="padding-top:196px">2.4</div></div>
<div class="r" style="top:1786.5px">
<div>60</div><div>60</div><div>60</div><div>60</div><div>60</div><div></div><div></div></div>
</div>

<svg width="3838" height="2058" viewBox="0 0 3838 2058" style="pointer-events:none">
<g fill="none" stroke="#ee1c25" stroke-width="13" stroke-linecap="round" stroke-linejoin="round">
<path d="M481 516L448 502Q415 489 385 481Q356 473 302 469Q249 466 186 472Q124 478 91 484Q58 491 37 502Q17 513 10 531Q4 549 4 576Q4 603 18 632Q33 661 50 692Q66 723 85 752Q104 782 137 830Q170 878 199 921Q228 965 259 1001Q290 1038 319 1069Q348 1101 381 1120Q415 1140 448 1153Q481 1166 510 1171Q539 1176 601 1179Q663 1183 746 1184Q829 1186 866 1183Q904 1181 929 1165Q954 1149 1007 1113Q1061 1077 1111 1033Q1161 989 1188 948Q1215 907 1221 880Q1227 854 1223 800Q1219 747 1204 706Q1190 665 1175 622Q1161 580 1140 542Q1119 504 1086 473Q1053 442 1015 419Q978 397 928 383Q879 370 833 369Q788 368 746 371Q705 375 642 386Q580 397 518 410Q456 424 414 435Q373 446 348 459Q323 473 290 504"/>
<path d="M1500 243L1404 284M1404 285L1433 280Q1462 275 1487 269Q1512 263 1562 260Q1612 257 1661 253Q1711 250 1827 244Q1943 239 2047 226Q2151 213 2213 211Q2275 210 2308 215Q2341 221 2366 242Q2391 263 2432 314Q2474 366 2480 406Q2486 446 2480 491Q2474 536 2457 603Q2441 670 2420 738Q2399 806 2374 865Q2350 924 2312 987Q2275 1050 2229 1103Q2184 1156 2146 1198Q2109 1240 2063 1290Q2018 1340 1989 1366Q1960 1392 1939 1407Q1918 1423 1897 1427Q1877 1431 1835 1427Q1794 1423 1736 1407Q1678 1392 1636 1376Q1595 1360 1562 1342Q1529 1324 1504 1298Q1479 1273 1433 1229Q1388 1185 1359 1153Q1330 1122 1321 1090Q1313 1059 1317 1017Q1321 975 1331 932Q1342 890 1342 827Q1342 764 1336 732Q1330 700 1313 640Q1297 580 1292 546Q1288 513 1292 479Q1297 446 1307 419Q1317 393 1327 379Q1338 366 1350 343Q1363 321 1383 303L1404 285"/>
<path d="M2717 913L2748 878Q2780 844 2800 822Q2821 800 2840 789Q2860 778 2886 769Q2912 760 2974 737Q3037 714 3086 699Q3136 684 3161 682Q3186 681 3235 687Q3285 694 3351 696Q3417 699 3458 706Q3500 714 3529 732Q3558 750 3584 764Q3611 778 3648 807Q3685 837 3711 872Q3738 908 3759 959Q3781 1010 3791 1058Q3801 1107 3802 1143Q3803 1179 3795 1219Q3788 1260 3763 1303Q3738 1347 3704 1385Q3671 1423 3648 1454Q3625 1485 3610 1517Q3595 1550 3556 1600Q3518 1650 3481 1688Q3444 1727 3414 1750Q3385 1773 3347 1789Q3310 1805 3295 1807Q3281 1809 3242 1798Q3203 1788 3155 1764Q3107 1740 3080 1724Q3053 1708 3026 1700Q3000 1692 2960 1669Q2920 1647 2903 1633Q2887 1619 2848 1596Q2810 1573 2773 1550Q2737 1528 2703 1497Q2670 1466 2645 1438Q2620 1410 2603 1380Q2587 1349 2574 1318Q2562 1288 2558 1265Q2555 1242 2556 1226Q2557 1211 2567 1180Q2577 1150 2587 1132Q2597 1114 2615 1088Q2633 1063 2643 1042Q2653 1022 2658 996Q2663 971 2675 953Q2687 936 2697 918Q2707 900 2728 866"/>
</g>
</svg>
</body></html>
